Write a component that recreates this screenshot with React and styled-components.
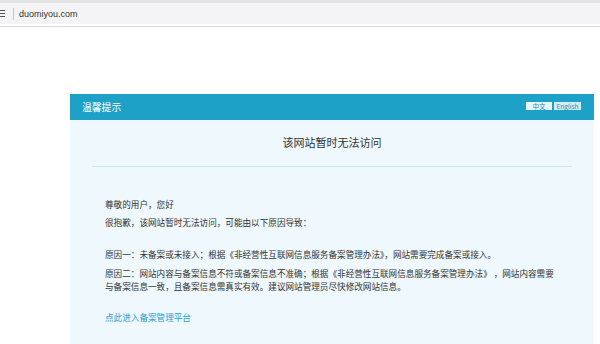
import React from "react";
import styled, { createGlobalStyle } from "styled-components";

const Global = createGlobalStyle`
  html, body { margin: 0; padding: 0; background: #ffffff; }
  body { width: 600px; height: 344px; overflow: hidden; font-family: "Noto Sans CJK SC", "Noto Sans", sans-serif; }
`;

const Page = styled.div`
  display: flex;
  flex-direction: column;
  width: 600px;
  height: 344px;
  overflow: hidden;
`;

const BrowserBar = styled.div`
  height: 27px;
  box-sizing: border-box;
  background: #e3e3e3;
  padding-top: 3px;
  border-bottom: 1px solid #dadada;
`;

const AddressBar = styled.div`
  height: 21px;
  background: #f4f4f6;
  display: flex;
  align-items: center;
  gap: 5px;
  border-bottom: 2px solid #ffffff;
`;

const InfoIcon = styled.div`
  width: 7px;
  height: 9px;
  margin-left: -2px;
  display: flex;
  flex-direction: column;
  justify-content: center;
  gap: 2px;
  & > span { display: block; height: 1px; background: #555; }
`;

const Sep = styled.div`
  width: 1px;
  height: 12px;
  background: #c8c8c8;
  margin-left: 3px;
`;

const Url = styled.span`
  font-family: "Liberation Sans", Arial, sans-serif;
  font-size: 9px;
  color: #333;
`;

const Stage = styled.div`
  flex: 1;
  padding: 67px 6px 0 70px;
`;

const Panel = styled.div`
  width: 524px;
  height: 400px;
  background: #eef8fd;
`;

const Header = styled.div`
  height: 26px;
  background: #1ea1c6;
  display: flex;
  align-items: center;
  justify-content: space-between;
  padding: 0 13px 0 12px;
`;

const HeaderTitle = styled.span`
  color: #ffffff;
  font-size: 9.8px;
`;

const Langs = styled.div`
  display: flex;
  gap: 2px;
  margin-top: -2px;
`;

const Lang = styled.span`
  display: inline-flex;
  align-items: center;
  justify-content: center;
  width: ${(p) => p.$w}px;
  height: 8px;
  background: ${(p) => (p.$active ? "#e8f6fb" : "#d3edf6")};
  color: #1a8fb8;
  font-family: "Noto Sans CJK SC", "Liberation Sans", sans-serif;
  font-size: 6.5px;
  line-height: 8px;
`;

const Title = styled.div`
  text-align: center;
  font-size: 11px;
  color: #333;
  padding-top: 15px;
  height: 31px;
  box-sizing: border-box;
  line-height: 14px;
`;

const Divider = styled.div`
  margin: 15px 22px 0;
  height: 1px;
  background: #c9e6f1;
`;

const Body = styled.div`
  padding: 31px 35px 0 35px;
  color: #333;
  font-size: 8.6px;
  line-height: 13px;
`;

const Para = styled.p`
  margin: 0 0 ${(p) => p.$mb || 5}px;
`;

const Link = styled.a`
  color: #2a9ed0;
  text-decoration: none;
  font-size: 8.6px;
`;

export default function App() {
  return (
    <>
      <Global />
      <Page>
        <BrowserBar>
          <AddressBar>
            <InfoIcon>
              <span />
              <span />
              <span />
            </InfoIcon>
            <Sep />
            <Url>duomiyou.com</Url>
          </AddressBar>
        </BrowserBar>
        <Stage>
          <Panel>
            <Header>
              <HeaderTitle>温馨提示</HeaderTitle>
              <Langs>
                <Lang $w={26} $active>中文</Lang>
                <Lang $w={27}>English</Lang>
              </Langs>
            </Header>
            <Title>该网站暂时无法访问</Title>
            <Divider />
            <Body>
              <Para $mb={5}>尊敬的用户，您好</Para>
              <Para $mb={19}>很抱歉，该网站暂时无法访问，可能由以下原因导致：</Para>
              <Para $mb={6}>原因一：未备案或未接入；根据《非经营性互联网信息服务备案管理办法》，网站需要完成备案或接入。</Para>
              <Para $mb={18}>
                原因二：网站内容与备案信息不符或备案信息不准确；根据《非经营性互联网信息服务备案管理办法》 ，网站内容需要与备案信息一致，且备案信息需真实有效。建议网站管理员尽快修改网站信息。
              </Para>
              <Link href="#">点此进入备案管理平台</Link>
            </Body>
          </Panel>
        </Stage>
      </Page>
    </>
  );
}
